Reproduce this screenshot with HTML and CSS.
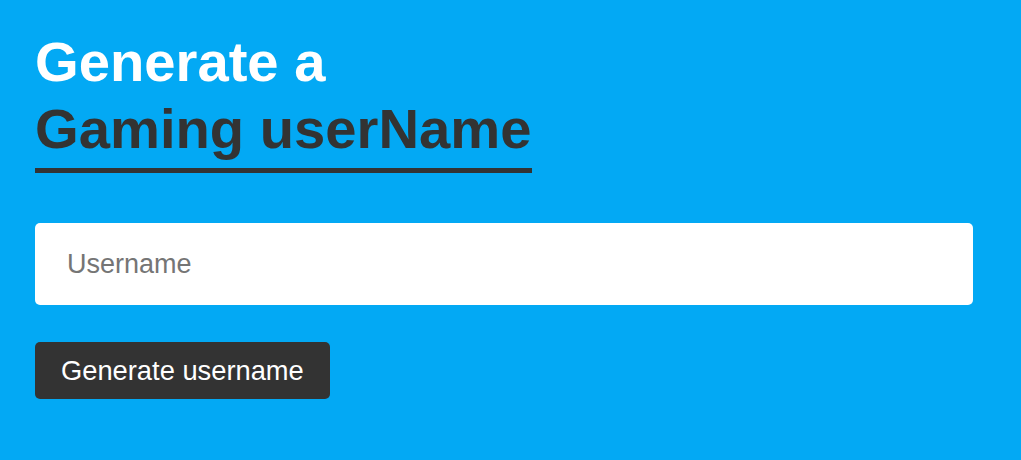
FILE: index.html
```html
<!DOCTYPE html>
<html lang="en">
<head>
<meta charset="utf-8">
<title>Gaming Username Generator</title>
<link rel="stylesheet" href="styles.css">
</head>
<body>
<main class="page">
  <h1 class="title">Generate a<br><span class="title-accent">Gaming userName</span></h1>
  <form class="form">
    <input class="field" type="text" placeholder="Username">
    <button class="btn" type="button">Generate username</button>
  </form>
</main>
</body>
</html>
```
FILE: styles.css
```css
html, body {
  margin: 0;
  padding: 0;
  height: 100%;
}
body {
  background: #03a9f4;
  font-family: "Liberation Sans", Arial, sans-serif;
}
.page {
  padding: 28px 35px;
}
.title {
  margin: 0;
  font-size: 56.2px;
  line-height: 67px;
  font-weight: 700;
  color: #ffffff;
}
.title-accent {
  display: inline-block;
  color: #333333;
  padding-bottom: 6px;
  border-bottom: 5px solid #333333;
}
.form {
  display: flex;
  flex-direction: column;
  align-items: flex-start;
  gap: 37px;
  width: 938px;
  margin-top: 50px;
}
.field {
  box-sizing: border-box;
  width: 100%;
  height: 82px;
  padding: 0 32px;
  border: none;
  border-radius: 5px;
  background: #ffffff;
  font-family: "Liberation Sans", Arial, sans-serif;
  font-size: 27px;
  color: #333;
  outline: none;
}
.field::placeholder {
  color: #757575;
}
.btn {
  box-sizing: border-box;
  height: 57px;
  padding: 0 26px;
  border: none;
  border-radius: 5px;
  background: #333333;
  color: #ffffff;
  font-family: "Liberation Sans", Arial, sans-serif;
  font-size: 27.3px;
  cursor: pointer;
}
```
